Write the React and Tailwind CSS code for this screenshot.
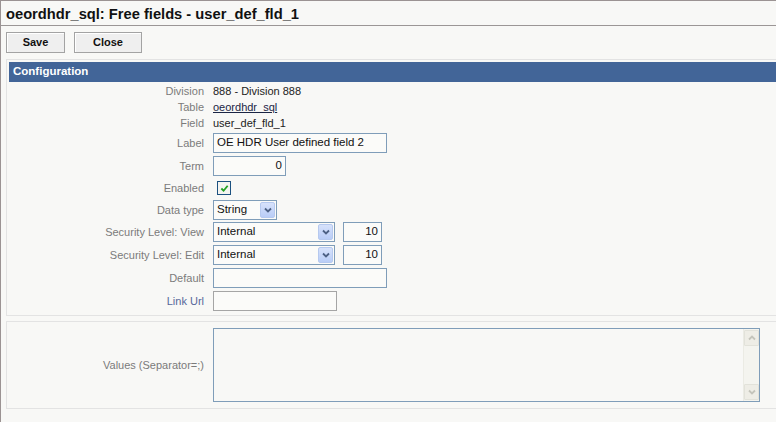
import React from "react";

const Chevron = ({ className }) => (
  <svg viewBox="0 0 8 6" className={className} fill="none">
    <path d="M1 1.5 L4 4.5 L7 1.5" stroke="currentColor" strokeWidth="1.8" />
  </svg>
);

const Select = ({ value, width }) => (
  <div
    className={`${width} h-[20px] flex items-center border border-[#7f9db9] bg-[#fbfbf9] pl-[3px] pr-[1px]`}
  >
    <span className="flex-1 text-[#111] text-[11.5px]">{value}</span>
    <div className="w-[15px] h-[16px] rounded-[2px] border border-[#b6c9ef] bg-gradient-to-b from-[#d7e2fb] to-[#b9cdf7] flex items-center justify-center text-[#4d6185]">
      <Chevron className="w-[8px] h-[6px]" />
    </div>
  </div>
);

const Row = ({ label, mt, h, labelColor = "text-[#7b7b7b]", children }) => (
  <div className={`flex items-center gap-[9px] ${h} ${mt}`}>
    <div className={`w-[195px] shrink-0 text-right ${labelColor}`}>{label}</div>
    {children}
  </div>
);

export default function App() {
  return (
    <div className="w-[776px] h-[422px] overflow-hidden bg-[#f8f8f6] border-t border-l border-[#9b9393] font-['Liberation_Sans',Arial,sans-serif] text-[11px]">
      {/* title */}
      <div className="h-[24px] pl-[5px] flex items-center">
        <h1 className="text-[14.7px] font-bold text-[#111] leading-none pt-[2px]">
          oeordhdr_sql: Free fields - user_def_fld_1
        </h1>
      </div>
      <div className="border-t border-[#9b9696]" />

      {/* buttons */}
      <div className="flex gap-[9px] pl-[5px] mt-[6px] mb-[6px]">
        <button className="w-[59px] h-[21px] border border-[#a3a3a3] bg-[#efefef] shadow-[inset_1px_1px_0_#ffffff] text-[11px] font-bold text-[#111]">
          Save
        </button>
        <button className="w-[68px] h-[21px] border border-[#a3a3a3] bg-[#efefef] shadow-[inset_1px_1px_0_#ffffff] text-[11px] font-bold text-[#111]">
          Close
        </button>
      </div>

      {/* configuration section */}
      <div className="ml-[5px] border-t border-l border-b border-[#e3e3e3] pt-[2px] pl-[2px] pb-[4px]">
        <div className="h-[20px] bg-[#426598] flex items-center pl-[4px] text-white font-bold text-[11.5px]">
          Configuration
        </div>

        <div className="pt-[1px]">
          <Row label="Division" h="h-[16px]">
            <span className="text-[#222]">888 - Division 888</span>
          </Row>
          <Row label="Table" h="h-[16px]">
            <a className="text-[#1b2545] underline">oeordhdr_sql</a>
          </Row>
          <Row label="Field" h="h-[16px]">
            <span className="text-[#222]">user_def_fld_1</span>
          </Row>

          <Row label="Label" h="h-[20px]" mt="mt-[2px]">
            <div className="w-[174px] h-[20px] border border-[#7f9db9] bg-[#fbfbf9] flex items-center pl-[3px] text-[#111] text-[11.5px] whitespace-nowrap overflow-hidden">
              OE HDR User defined field 2
            </div>
          </Row>
          <Row label="Term" h="h-[20px]" mt="mt-[3px]">
            <div className="w-[73px] h-[20px] border border-[#7f9db9] bg-[#fbfbf9] flex items-center justify-end pr-[3px] text-[#111] text-[11.5px]">
              0
            </div>
          </Row>
          <Row label="Enabled" h="h-[18px]" mt="mt-[3px]">
            <div className="ml-[4px] w-[14px] h-[14px] border border-[#1c5180] bg-[#f4f4f0] flex items-center justify-center">
              <svg viewBox="0 0 10 10" className="w-[9px] h-[9px]" fill="none">
                <path d="M1.5 5 L4 7.5 L8.5 2" stroke="#21a121" strokeWidth="2" />
              </svg>
            </div>
          </Row>
          <Row label="Data type" h="h-[20px]" mt="mt-[3px]">
            <Select value="String" width="w-[64px]" />
          </Row>
          <Row label="Security Level: View" h="h-[20px]" mt="mt-[2px]">
            <Select value="Internal" width="w-[122px]" />
            <div className="ml-[-1px] w-[39px] h-[20px] border border-[#7f9db9] bg-[#fbfbf9] flex items-center justify-end pr-[3px] text-[#111] text-[11.5px]">
              10
            </div>
          </Row>
          <Row label="Security Level: Edit" h="h-[20px]" mt="mt-[3px]">
            <Select value="Internal" width="w-[122px]" />
            <div className="ml-[-1px] w-[39px] h-[20px] border border-[#7f9db9] bg-[#fbfbf9] flex items-center justify-end pr-[3px] text-[#111] text-[11.5px]">
              10
            </div>
          </Row>
          <Row label="Default" h="h-[20px]" mt="mt-[3px]">
            <div className="w-[174px] h-[20px] border border-[#7f9db9] bg-[#fbfbf9]" />
          </Row>
          <Row label="Link Url" h="h-[20px]" mt="mt-[3px]" labelColor="text-[#56679a]">
            <div className="w-[124px] h-[20px] border border-[#a5a5a5] bg-[#fbfbf9]" />
          </Row>
        </div>
      </div>

      {/* values section */}
      <div className="ml-[5px] mt-[5px] border-t border-l border-b border-[#e3e3e3] pt-[6px] pb-[6px] pl-[2px]">
        <Row label="Values (Separator=;)" h="h-[74px]">
          <div className="w-[547px] h-[74px] border border-[#7f9db9] bg-[#f8f8f6] flex justify-end">
            <div className="w-[16px] h-full border-l border-[#ebebe4] bg-[#f4f4ef] flex flex-col justify-between py-[1px]">
              <div className="h-[16px] border border-[#e2e2da] bg-[#eeede6] rounded-[1px] flex items-center justify-center text-[#c4c4bb]">
                <Chevron className="w-[8px] h-[6px] rotate-180" />
              </div>
              <div className="h-[16px] border border-[#e2e2da] bg-[#eeede6] rounded-[1px] flex items-center justify-center text-[#c4c4bb]">
                <Chevron className="w-[8px] h-[6px]" />
              </div>
            </div>
          </div>
        </Row>
      </div>
    </div>
  );
}
